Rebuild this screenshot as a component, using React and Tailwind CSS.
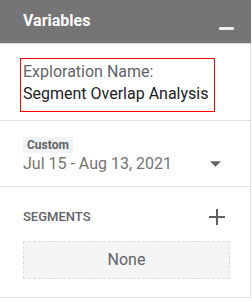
export default function App() {
  return (
    <div className="w-[251px] bg-white font-['Roboto','Liberation_Sans',sans-serif]">
      <div className="flex h-[44px] items-start justify-between border-b border-[#dadce0] bg-[#757575] pl-[23px] pr-[17px]">
        <h2 className="mt-[11px] text-[16px] font-bold leading-5 text-white">Variables</h2>
        <div className="mt-[27px] h-[3px] w-[15px] rounded-[1px] bg-[#eeeeee]"></div>
      </div>

      <div className="border-r border-b border-[#e0e0e0]">
        <div className="border-b border-[#e0e0e0] pl-[20px] pt-[14px] pb-[8px]">
          <div className="w-[195px] border border-[#ff0000] pl-[2px] pt-[2px] pb-[6px] text-[16px] leading-[22px]">
            <div className="text-[#5f6368]">Exploration Name:</div>
            <div className="text-[#202124]">Segment Overlap Analysis</div>
          </div>
        </div>

        <div className="flex items-end justify-between border-b border-[#e0e0e0] pl-[23px] pr-[29px] pt-[16px] pb-[12px]">
          <div>
            <div className="h-[16px] w-fit bg-[#f1f3f4] px-[4px] text-[12px] font-bold leading-[16px] text-[#5f6368]">
              Custom
            </div>
            <div className="mt-[1px] text-[16px] leading-5 text-[#757575]">Jul 15 - Aug 13, 2021</div>
          </div>
          <div className="flex h-5 items-center">
            <svg width="11" height="6" viewBox="0 0 10 5">
              <path d="M0 0h10L5 5z" fill="#616161" />
            </svg>
          </div>
        </div>

        <div className="pl-[23px] pr-[20px] pt-[22px] pb-[18px]">
          <div className="flex h-4 items-center justify-between pr-[5px]">
            <span className="text-[13px] font-medium leading-4 text-[#5f6368]">SEGMENTS</span>
            <svg width="16" height="16" viewBox="0 0 16 16">
              <path d="M8 0v16M0 8h16" stroke="#616161" strokeWidth="2" />
            </svg>
          </div>
          <div className="mt-[16px] flex h-[38px] w-[207px] items-center justify-center border border-dashed border-[#dddddd] bg-[#f5f5f5] text-[16px] text-[#5f6368]">
            None
          </div>
        </div>
      </div>
    </div>
  );
}
